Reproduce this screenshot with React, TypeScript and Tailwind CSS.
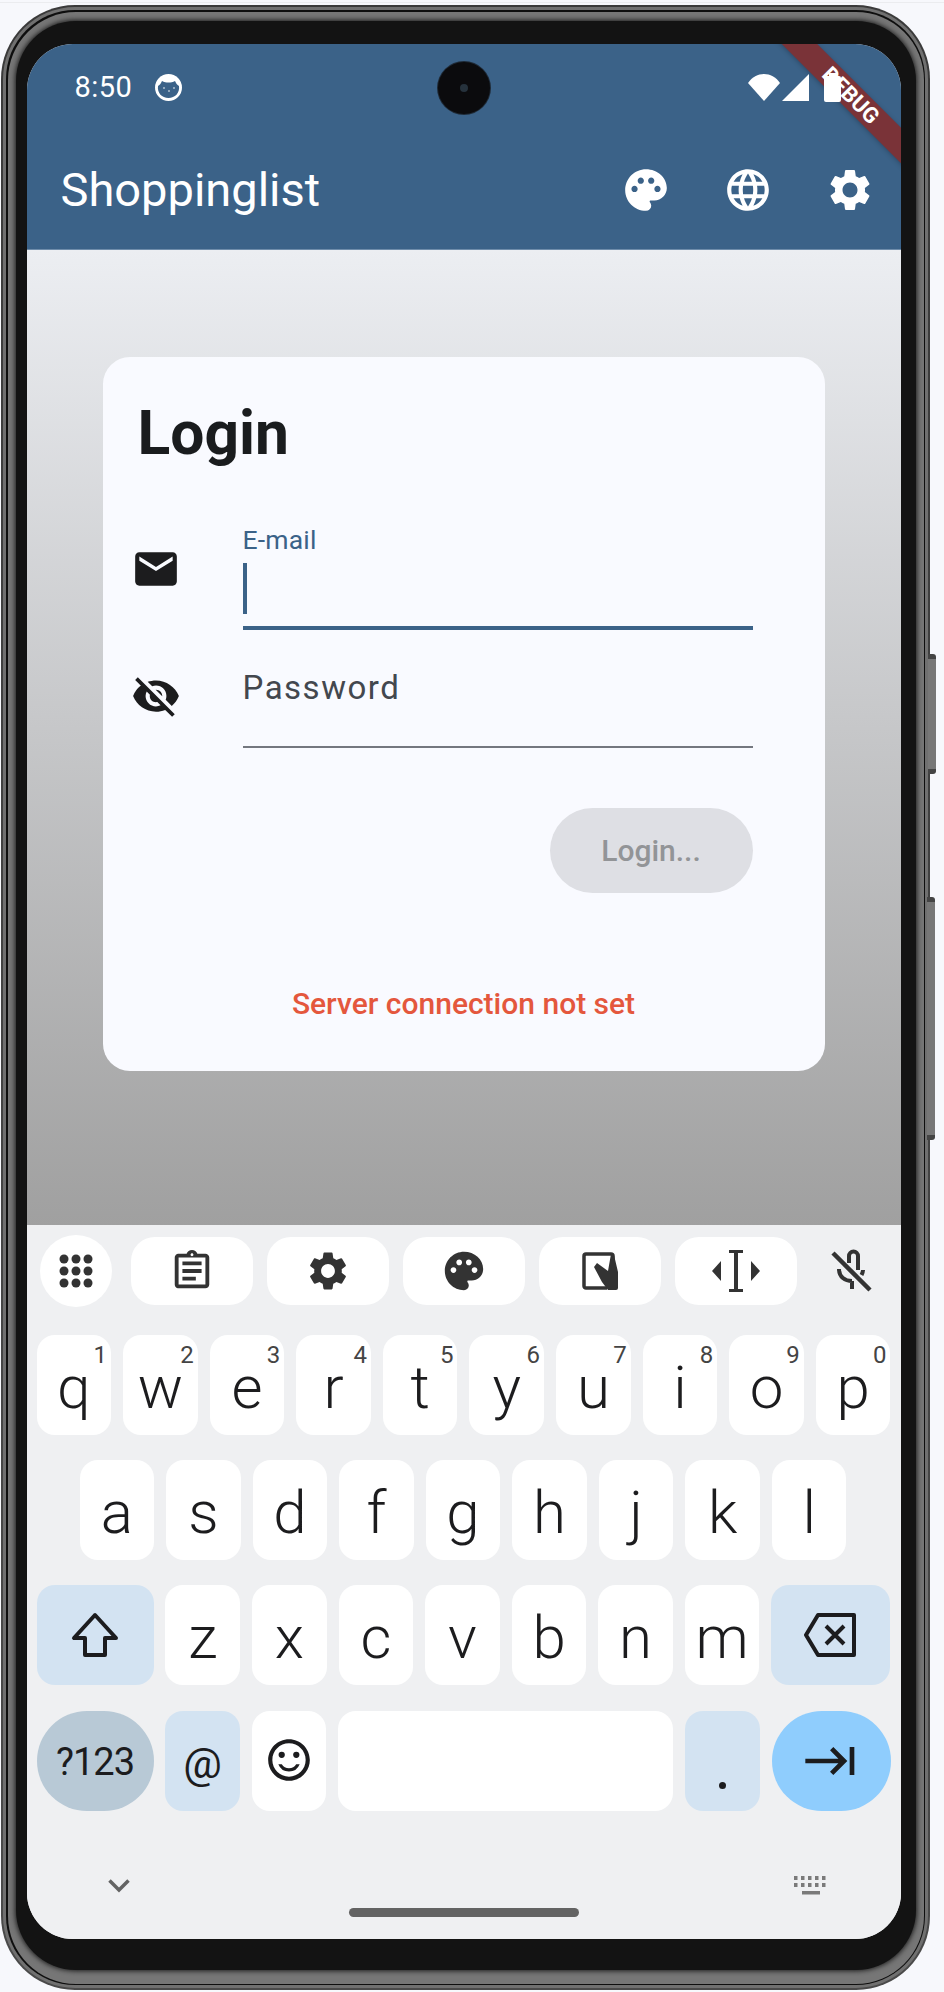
import type { ReactNode } from "react";
import {
  MdEmail,
  MdKeyboardTab,
  MdLanguage,
  MdOutlineAssignment,
  MdOutlineSentimentSatisfiedAlt,
  MdPalette,
  MdSettings,
  MdVisibilityOff,
} from "react-icons/md";

const topRow = [
  ["q", "1"],
  ["w", "2"],
  ["e", "3"],
  ["r", "4"],
  ["t", "5"],
  ["y", "6"],
  ["u", "7"],
  ["i", "8"],
  ["o", "9"],
  ["p", "0"],
];
const midRow = ["a", "s", "d", "f", "g", "h", "j", "k", "l"];
const lowRow = ["z", "x", "c", "v", "b", "n", "m"];

const Key = ({ label, hint }: { label: string; hint?: string }) => (
  <div className="relative flex h-[100px] w-[74.6px] shrink-0 items-center justify-center rounded-[18px] bg-white pt-[6px] text-[60px] font-[350] leading-none text-[#1c1c1e]">
    {label}
    {hint && <span className="absolute right-[4px] top-[6px] text-[24px] font-normal leading-[28px] text-[#444]">{hint}</span>}
  </div>
);

const ToolPill = ({ children }: { children: ReactNode }) => (
  <div className="flex h-[68px] w-[122px] items-center justify-center rounded-[24px] bg-white text-[#333]">{children}</div>
);

const StatusIcons = () => (
  <div className="relative z-20 flex h-[86px] items-center justify-between pl-[48px] pr-[60px] pt-[2px] text-white">
    <div className="flex items-center gap-[23px]">
      <span className="text-[29px] leading-none tracking-[0.5px]">8:50</span>
      <svg width="27" height="27" viewBox="0 0 27 27">
        <circle cx="13.5" cy="13.5" r="13.5" fill="#fff" />
        <path d="M3 12c2-1 3-3 4-5 4 2 9 2 13 0 1 2 2 4 4 5 1 7-4 12-10.500 12S2 19 3 12z" fill="#3b6288" />
        <circle cx="9" cy="14" r="0.8" fill="#fff" />
        <circle cx="14" cy="17" r="0.8" fill="#fff" />
        <circle cx="19" cy="14" r="0.8" fill="#fff" />
      </svg>
    </div>
    <div className="flex items-center">
      <svg width="32" height="27" viewBox="0 0 32 27">
        <path d="M0 9C4 3 10 0 16 0s12 3 16 9L16 27z" fill="#fff" />
      </svg>
      <svg className="ml-[2px]" width="28" height="27" viewBox="0 0 28 27">
        <path d="M27 0v27H0z" fill="#fff" />
      </svg>
      <svg className="ml-[14px]" width="17" height="29" viewBox="0 0 17 29">
        <path d="M5 3V0h7v3h3a2 2 0 0 1 2 2v22a2 2 0 0 1-2 2H2a2 2 0 0 1-2-2V5a2 2 0 0 1 2-2z" fill="#fff" />
      </svg>
    </div>
  </div>
);

const DebugBanner = () => (
  <div className="absolute left-[713px] top-[48px] z-10 flex h-[25px] w-[240px] rotate-45 items-center justify-center bg-[#7a3338] pr-[26px] text-[22px] font-bold leading-none text-white shadow-[0_1px_5px_rgba(0,0,0,0.25)]">
    DEBUG
  </div>
);

const LoginCard = () => (
  <div className="ml-[76px] mt-[107px] h-[714px] w-[722px] rounded-[27px] bg-[#f9faff] pl-[35px]">
    <h1 className="pt-[43px] text-[60.500px] font-bold leading-[68px] text-[#1a1c1e]">Login</h1>

    <div className="mt-[58px] flex">
      <MdEmail className="ml-[-7px] mt-[18px] text-[#1c1c1e]" size={50} />
      <div className="ml-[62px] w-[510px]">
        <div className="h-[28px] text-[26.500px] leading-[28px] tracking-[0.2px] text-[#3b6288]">E-mail</div>
        <div className="h-[76px] border-b-[4px] border-[#3b6288] pt-[9px]">
          <div className="h-[51px] w-[4px] bg-[#3b6288]" />
        </div>
      </div>
    </div>

    <div className="mt-[37px] flex">
      <MdVisibilityOff className="ml-[-7px] mt-[4px] text-[#1c1c1e]" size={50} />
      <div className="ml-[62px] h-[81px] w-[510px] border-b-[2px] border-[#74777f] text-[33px] leading-[42px] tracking-[1.5px] text-[#43474e]">
        Password
      </div>
    </div>

    <div className="ml-[412px] mt-[60px] flex h-[85px] w-[203px] items-center justify-center rounded-full bg-[#dedfe4] text-[30px] font-medium text-[#929497]">
      Login...
    </div>

    <div className="ml-[-35px] mt-[93px] w-[722px] text-center text-[30px] font-medium leading-[36px] text-[#e4573d]">
      Server connection not set
    </div>
  </div>
);

const Keyboard = () => (
  <div className="relative h-[714px] bg-[#eff0f2]">
    <div className="flex items-center pl-[13px] pt-[10px]">
      <div className="flex h-[72px] w-[72px] items-center justify-center rounded-full bg-white">
        <svg width="36" height="36" viewBox="0 0 36 36" fill="#333">
          {[6, 18, 30].flatMap((y) =>
            [6, 18, 30].map((x) => <circle key={`${x}-${y}`} cx={x} cy={y} r="4.500" />),
          )}
        </svg>
      </div>
      <div className="ml-[19px] flex gap-[14px]">
        <ToolPill>
          <MdOutlineAssignment size={46} />
        </ToolPill>
        <ToolPill>
          <MdSettings size={46} />
        </ToolPill>
        <ToolPill>
          <MdPalette size={46} />
        </ToolPill>
        <ToolPill>
          <svg width="36" height="38" viewBox="0 0 36 38">
            <path d="M25 36H4a2 2 0 0 1-2-2V4a2 2 0 0 1 2-2h25a2 2 0 0 1 2 2v6" fill="none" stroke="#333" strokeWidth="3.500" />
            <path d="M12 15l3-4 11 8 3-17 3 1 4 17v16a2 2 0 0 1-2 2H26l-6-8z" fill="#333" />
          </svg>
        </ToolPill>
        <ToolPill>
          <svg width="48" height="42" viewBox="0 0 48 42" fill="#333">
            <path d="M17 0h14v3h-5v36h5v3H17v-3h5V3h-5z" />
            <path d="M0 21l9-10v20zM48 21l-9-10v20z" />
          </svg>
        </ToolPill>
      </div>
      <svg className="ml-[33px]" width="44" height="44" viewBox="0 0 44 44" fill="none" stroke="#333" strokeWidth="4">
        <path d="M19 14V7a4.500 4.500 0 0 1 9 0v14" />
        <path d="M9 20c0 8 6 12 13 12M22 32v8M33 21c0 2-1 4-1.500 5" />
        <path d="M3 4l37 37" strokeWidth="4.500" />
      </svg>
    </div>

    <div className="mt-[28px] flex justify-between px-[10px]">
      {topRow.map(([k, n]) => (
        <Key key={k} label={k} hint={n} />
      ))}
    </div>

    <div className="mt-[25px] flex justify-between pl-[53px] pr-[54px]">
      {midRow.map((k) => (
        <Key key={k} label={k} />
      ))}
    </div>

    <div className="mt-[25px] flex justify-between px-[10px]">
      <div className="flex h-[100px] w-[117px] items-center justify-center rounded-[18px] bg-[#d3e3f2]">
        <svg width="48" height="46" viewBox="0 0 48 46" fill="none" stroke="#1c1c1e" strokeWidth="4" strokeLinejoin="round">
          <path d="M24 3L3 26h11v17h20V26h11z" />
        </svg>
      </div>
      {lowRow.map((k) => (
        <Key key={k} label={k} />
      ))}
      <div className="flex h-[100px] w-[119px] items-center justify-center rounded-[18px] bg-[#d3e3f2]">
        <svg width="54" height="44" viewBox="0 0 54 44" fill="none" stroke="#1c1c1e" strokeWidth="4" strokeLinejoin="round">
          <path d="M14 2h36v40H14L2 22z" />
          <path d="M22 13l18 18M40 13L22 31" />
        </svg>
      </div>
    </div>

    <div className="mt-[26px] flex justify-between px-[10px]">
      <div className="flex h-[100px] w-[117px] items-center justify-center rounded-[50px] bg-[#b8c9d6] pt-[3px] text-[38px] tracking-[-1px] text-[#1c1c1e]">?123</div>
      <div className="flex h-[100px] w-[74.6px] items-center justify-center rounded-[18px] bg-[#d3e3f2] pt-[6px] text-[43px] text-[#1c1c1e]">@</div>
      <div className="flex h-[100px] w-[74.6px] items-center justify-center rounded-[18px] bg-white pb-[2px] text-[#1c1c1e]">
        <MdOutlineSentimentSatisfiedAlt size={50} />
      </div>
      <div className="h-[100px] w-[335px] rounded-[18px] bg-white" />
      <div className="flex h-[100px] w-[74.6px] items-end justify-center rounded-[18px] bg-[#d3e3f2] pb-[22px]">
        <span className="h-[7px] w-[7px] rounded-full bg-[#1c1c1e]" />
      </div>
      <div className="flex h-[100px] w-[119px] items-center justify-center rounded-[50px] bg-[#8fcdfd] text-[#1c1c1e]">
        <MdKeyboardTab size={56} />
      </div>
    </div>

    <div className="mt-[65px] flex items-center justify-between pl-[81px] pr-[73px]">
      <svg width="22" height="14" viewBox="0 0 22 14" fill="none" stroke="#636363" strokeWidth="3.500">
        <path d="M1.500 1.500L11 11l9.500-9.500" />
      </svg>
      <svg width="34" height="20" viewBox="0 0 34 20" fill="#7a7a7a">
        {[0, 7, 14, 21, 28].flatMap((x) =>
          [0, 7].map((y) => <rect key={`${x}-${y}`} x={x} y={y} width="3.500" height="4" />),
        )}
        <rect x="8" y="15" width="18" height="3.500" />
      </svg>
    </div>

    <div className="mx-auto mt-[12px] h-[9px] w-[230px] rounded-full bg-[#636363]" />
  </div>
);

export default function App() {
  return (
    <div className="h-[1992px] w-[944px] overflow-hidden bg-[#f7f8fc] font-['Roboto',sans-serif]">
      <div className="h-[3px] border-b border-[#ebecef]" />
      {/* phone body */}
      <div className="relative ml-[1px] mt-[2px] h-[1985px] w-[929px] rounded-[74px] bg-gradient-to-b from-[#3a3a3a] to-[#4a4a4a] p-[2px]">
        <div className="absolute left-[927px] top-[649px] h-[120px] w-[8px] rounded-r-[3px] border-y-[5px] border-y-[#444] bg-[#777]" />
        <div className="absolute left-[926px] top-[892px] h-[243px] w-[8px] rounded-r-[3px] border-y-[5px] border-y-[#444] bg-[#777]" />
        <div className="h-full rounded-[72px] bg-[#707070] p-[3px]">
          <div className="h-full rounded-[69px] bg-[#0e0e0e] p-[1.500px]">
            <div className="h-full rounded-[68px] bg-[#767676] px-[8px] pb-[14px] pt-[9px]">
              <div className="h-full rounded-[60px] bg-[#131313] px-[11px] pb-[35px] pt-[23px] shadow-[0_0_5px_1px_#1a1a1a]">
                {/* screen */}
                <div className="relative flex h-[1895px] w-[874px] flex-col overflow-hidden rounded-[46px] bg-[#eff0f2]">
                  <div className="h-[206px] shrink-0 border-b border-[#6f8dab] bg-[#3b6288]">
                    <StatusIcons />
                    <div className="flex h-[120px] items-center justify-between pl-[34px] text-white">
                      <span className="text-[47px] leading-none">Shoppinglist</span>
                      <div className="flex">
                        <div className="flex w-[102px] justify-center">
                          <MdPalette size={50} />
                        </div>
                        <div className="flex w-[102px] justify-center">
                          <MdLanguage size={50} />
                        </div>
                        <div className="flex w-[102px] justify-center">
                          <MdSettings size={50} />
                        </div>
                      </div>
                    </div>
                  </div>
                  <div className="h-[975px] shrink-0 overflow-hidden bg-gradient-to-b from-[#eceef2] to-[#a0a0a0]">
                    <LoginCard />
                  </div>
                  <Keyboard />
                  <DebugBanner />
                  {/* front camera */}
                  <div className="absolute left-[411px] top-[18px] z-30 flex h-[52px] w-[52px] items-center justify-center rounded-full bg-[#0b0b0d] shadow-[0_0_0_1px_#1f2a36]">
                    <div className="h-[8px] w-[8px] rounded-full bg-[#26323c]" />
                  </div>
                </div>
              </div>
            </div>
          </div>
        </div>
      </div>
    </div>
  );
}
